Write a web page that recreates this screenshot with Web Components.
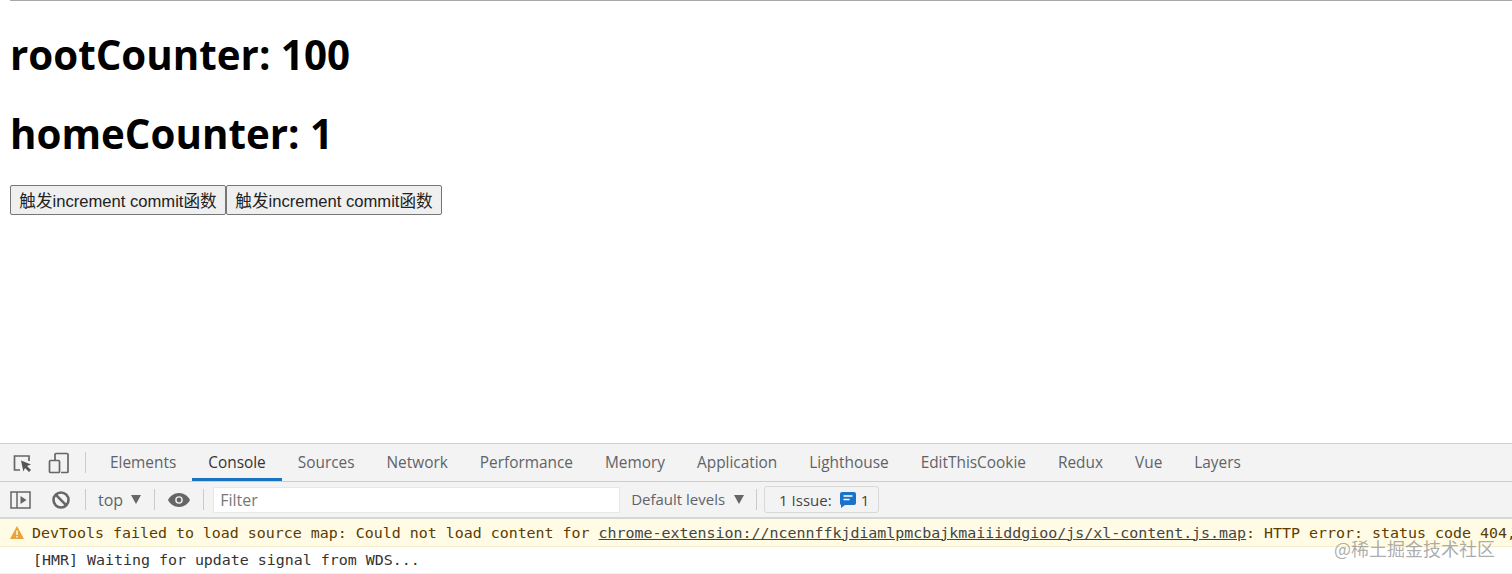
<!DOCTYPE html>
<html lang="zh">
<head>
<meta charset="utf-8">
<title>Counter</title>
<style>
  html, body { margin: 0; height: 574px; overflow: hidden; background: #fff; }
  body { display: flex; flex-direction: column; }
</style>
</head>
<body>
<counter-page>
  <counter-title>rootCounter: 100</counter-title>
  <counter-title>homeCounter: 1</counter-title>
  <div slot="actions">
    <commit-button>触发increment commit函数</commit-button><commit-button>触发increment commit函数</commit-button>
  </div>
</counter-page>
<dev-tools></dev-tools>
<script>
// page part
class CounterPage extends HTMLElement {
  constructor() {
    super();
    this.attachShadow({ mode: 'open' }).innerHTML = `
      <style>
        :host { display: block; flex: 1; padding: 0 0 0 10px; }
        .rule { height: 1px; background: #a8a8a8; }
        .titles { display: flex; flex-direction: column; gap: 30px; padding-top: 29px; }
        .actions { margin-top: 27px; }
        ::slotted(div) { display: flex; }
      </style>
      <div class="rule"></div>
      <div class="titles"><slot></slot></div>
      <div class="actions"><slot name="actions"></slot></div>`;
  }
}

class CounterTitle extends HTMLElement {
  constructor() {
    super();
    this.attachShadow({ mode: 'open' }).innerHTML = `
      <style>
        :host { display: block; font: 700 40.3px/49px "Open Sans", "Noto Sans", sans-serif; color: #000; }
      </style>
      <slot></slot>`;
  }
}

class CommitButton extends HTMLElement {
  constructor() {
    super();
    this.attachShadow({ mode: 'open' }).innerHTML = `
      <style>
        :host { display: block; }
        button {
          display: block; width: 216px; height: 30px; padding: 0; box-sizing: border-box;
          background: #efefef; border: 1px solid #767676; border-radius: 2px; color: #222;
          font: 16.6px "Liberation Sans", "Noto Sans CJK SC", sans-serif; white-space: nowrap;
        }
      </style>
      <button><slot></slot></button>`;
  }
}

// devtools part
class DevTab extends HTMLElement {
  constructor() {
    super();
    this.attachShadow({ mode: 'open' }).innerHTML = `
      <style>
        :host { display: flex; align-items: center; height: 100%; padding: 0 16px; box-sizing: border-box;
          color: #5f6368; border-bottom: 3px solid transparent; padding-top: 3px; }
        :host([active]) { color: #333; border-bottom-color: #1a73c0; }
      </style>
      <slot></slot>`;
  }
}

class DevTools extends HTMLElement {
  constructor() {
    super();
    const tabs = ['Elements', 'Console', 'Sources', 'Network', 'Performance', 'Memory', 'Application', 'Lighthouse', 'EditThisCookie', 'Redux', 'Vue', 'Layers'];
    this.attachShadow({ mode: 'open' }).innerHTML = `
      <style>
        :host { display: block; height: 131px; flex: none; font: 15px "Open Sans", "Noto Sans", sans-serif; background: #fff; position: relative; }
        .tabbar { height: 37px; background: #f3f3f3; border-top: 1px solid #cfcfcf; border-bottom: 1px solid #cdcdcd; display: flex; align-items: stretch; }
        .tabbar svg, .toolbar svg { display: block; flex: none; }
        .tool-icons { display: flex; align-items: center; gap: 14px; padding: 0 0 0 12px; }
        .sep { width: 1px; height: 21px; background: #cbcbcb; flex: none; }
        .tabs { display: flex; height: 37px; margin-left: 8px; font-size: 15.4px; }
        .toolbar { height: 35px; background: #f3f3f3; border-bottom: 2px solid #d6d6d6; display: flex; align-items: center; color: #5f6368; }
        .top { display: flex; align-items: center; gap: 8px; margin: 0 13px 0 12px; font-size: 16px; }
        .caret { width: 0; height: 0; border: 5px solid transparent; border-top: 9px solid #666; border-bottom: 0; }
        .filter { width: 407px; height: 26px; margin-left: 9px; padding: 0 0 0 6px; box-sizing: border-box; background: #fff; border: 1px solid #e8e8e8; display: flex; align-items: center; color: #777; font-size: 16px; }
        .levels { display: flex; align-items: center; gap: 9px; margin: -2px 12px 0 11px; }
        .levels .caret { margin-top: 2px; }
        .issue { display: flex; align-items: center; height: 27px; width: 115px; box-sizing: border-box; margin-left: 7px; padding-left: 14px; border: 1px solid #d8d8d8; border-radius: 3px; color: #444; }
        .issue span:first-child { margin-right: 8px; }
        .issue svg { margin-right: 5px; }
        .warn { height: 28px; background: #fffbe5; border-bottom: 1px solid #f5eecb; display: flex; align-items: center; box-sizing: border-box; padding-left: 10px; overflow: hidden; white-space: nowrap; font: 14.95px "DejaVu Sans Mono", monospace; color: #5c3c00; }
        .warn svg { flex: none; margin-right: 8px; }
        .warn u { color: #444; }
        .log { height: 27px; display: flex; align-items: center; padding-left: 33px; font: 14.95px "DejaVu Sans Mono", monospace; color: #333; border-bottom: 1px solid #f0f0f0; box-sizing: border-box; }
        .mark { position: absolute; right: 17px; top: 96px; font: 18px/18px "Noto Sans CJK SC", "Noto Sans", sans-serif; color: rgba(120,120,120,.62); white-space: nowrap; }
      </style>
      <div class="tabbar">
        <div class="tool-icons">
          <svg width="22" height="20" viewBox="0 0 22 20" fill="none" stroke="#666" stroke-width="1.7"><path d="M8 17H2.500V3H17V8"/><path d="M9 7.500l10 4-4 1.600 4 4-2 2-4-4-1.600 3.500z" fill="#555" stroke="none"/></svg>
          <svg width="22" height="22" viewBox="0 0 22 22" fill="none" stroke="#666" stroke-width="1.7"><path d="M7 8V2.500a1 1 0 0 1 1-1h11a1 1 0 0 1 1 1v17a1 1 0 0 1-1 1h-6"/><rect x="1.500" y="8.500" width="10" height="12" rx="1"/></svg>
          <div class="sep" style="margin-left:1px"></div>
        </div>
        <div class="tabs">${tabs.map(t => `<dev-tab${t === 'Console' ? ' active' : ''}>${t}</dev-tab>`).join('')}</div>
      </div>
      <div class="toolbar">
        <svg style="margin-left:10px" width="22" height="20" viewBox="0 0 22 20" fill="none" stroke="#666" stroke-width="1.5"><rect x="1" y="2" width="19" height="16"/><path d="M7 2v16"/><path d="M10.500 6l6 4-6 4z" fill="#666" stroke="none"/></svg>
        <svg style="margin-left:19px" width="20" height="20" viewBox="0 0 20 20" fill="none" stroke="#666" stroke-width="2.600"><circle cx="10" cy="10" r="7.500"/><path d="M4.700 4.700l10.600 10.600"/></svg>
        <div class="sep" style="margin-left:14px"></div>
        <div class="top">top <span class="caret"></span></div>
        <div class="sep"></div>
        <svg style="margin-left:13px" width="22" height="14" viewBox="0 0 22 14"><path d="M11 0C6 0 2 3 0 7c2 4 6 7 11 7s9-3 11-7c-2-4-6-7-11-7z" fill="#666"/><circle cx="11" cy="7" r="3.800" fill="#f3f3f3"/><circle cx="11" cy="7" r="2.400" fill="#666"/></svg>
        <div class="sep" style="margin-left:13px"></div>
        <div class="filter">Filter</div>
        <div class="levels">Default levels <span class="caret"></span></div>
        <div class="sep"></div>
        <div class="issue"><span>1 Issue:</span>
          <svg width="16" height="16" viewBox="0 0 16 16"><path d="M2 0h12a2 2 0 0 1 2 2v9a2 2 0 0 1-2 2H5l-4 3V13a2 2 0 0 1-1-2V2a2 2 0 0 1 2-2z" fill="#1a73c8"/><path d="M3.500 4h9M3.500 7.500h6" stroke="#fff" stroke-width="1.500"/></svg>
          <span>1</span></div>
      </div>
      <div class="warn">
        <svg width="14" height="13" viewBox="0 0 14 13"><path d="M7 0l7 13H0z" fill="#e8a33a"/><path d="M7 4.500v4.500M7 10v1.500" stroke="#fffbe5" stroke-width="1.500"/></svg>
        <span>DevTools failed to load source map: Could not load content for <u>chrome-extension://ncennffkjdiamlpmcbajkmaiiiddgioo/js/xl-content.js.map</u>: HTTP error: status code 404,</span>
      </div>
      <div class="log">[HMR] Waiting for update signal from WDS...</div>
      <div class="mark">@稀土掘金技术社区</div>`;
  }
}

customElements.define('counter-page', CounterPage);
customElements.define('counter-title', CounterTitle);
customElements.define('commit-button', CommitButton);
customElements.define('dev-tab', DevTab);
customElements.define('dev-tools', DevTools);
</script>
</body>
</html>
